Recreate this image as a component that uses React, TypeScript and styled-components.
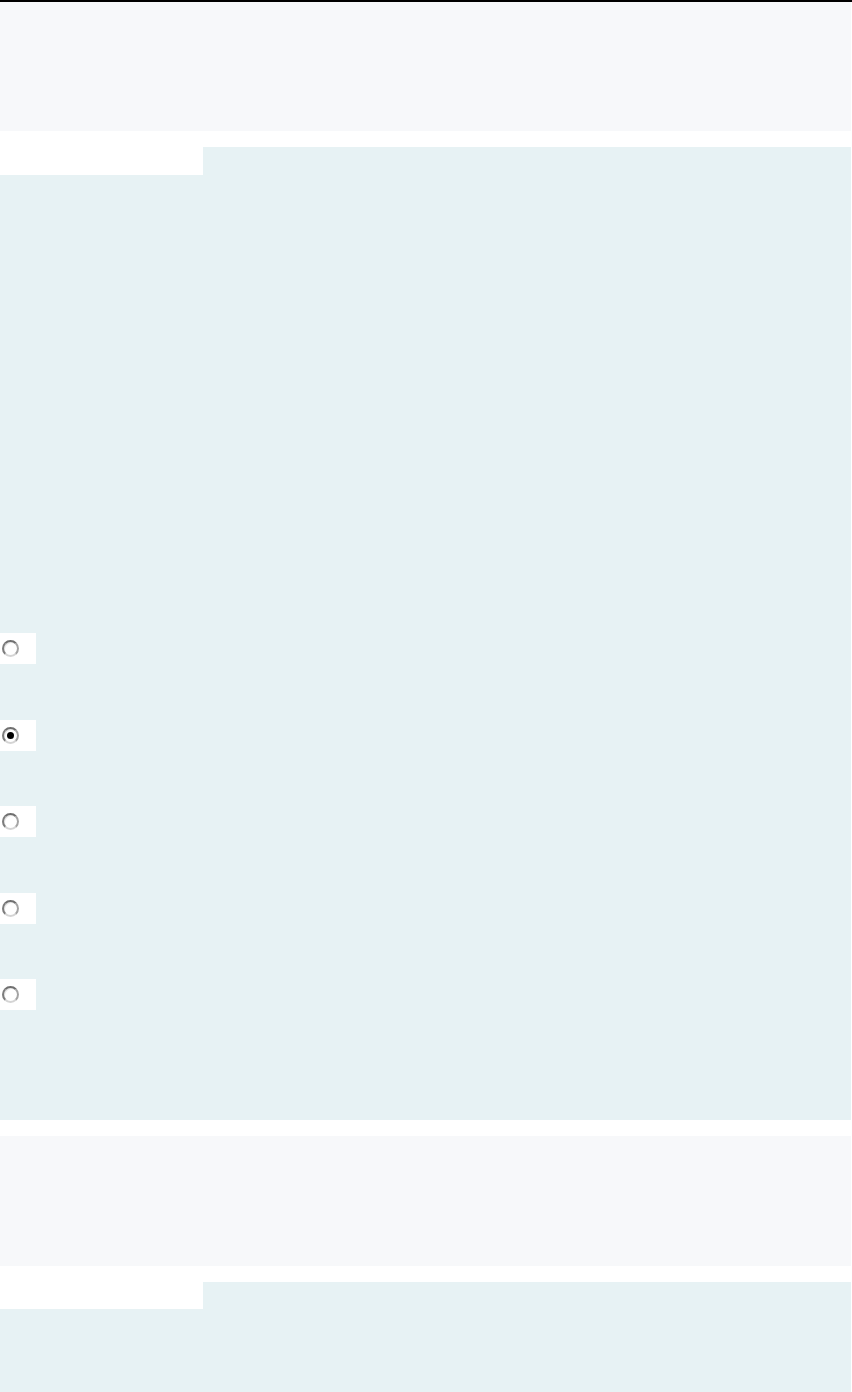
import React from "react";
import styled, { createGlobalStyle } from "styled-components";

const GlobalStyle = createGlobalStyle`
  html, body {
    margin: 0;
    padding: 0;
    background: #ffffff;
    font-family: "Liberation Sans", Arial, sans-serif;
  }
`;

const Page = styled.div`
  border-top: 2px solid #000000;
  display: flex;
  flex-direction: column;
  gap: 16px;
  width: 852px;
`;

const Question = styled.section`
  display: flex;
  flex-direction: column;
  gap: 16px;
  width: 851px;
`;

const Prompt = styled.div<{ $h: number }>`
  height: ${(p) => p.$h}px;
  background: #f7f8fa;
`;

const AnswerPanel = styled.div`
  display: flex;
  flex-direction: column;
  background: #e7f2f4;
`;

const PanelHead = styled.div<{ $h: number }>`
  display: grid;
  grid-template-columns: 203px 1fr;
  height: ${(p) => p.$h}px;
`;

const Tab = styled.div`
  background: #ffffff;
`;

const Options = styled.div<{ $top: number; $bottom: number }>`
  display: flex;
  flex-direction: column;
  gap: 55.5px;
  padding-top: ${(p) => p.$top}px;
  padding-bottom: ${(p) => p.$bottom}px;
`;

const OptionBox = styled.label`
  display: flex;
  align-items: center;
  width: 36px;
  height: 31px;
  padding-left: 2px;
  box-sizing: border-box;
  background: #ffffff;
`;

const Radio = styled.input.attrs({ type: "radio" })`
  appearance: none;
  -webkit-appearance: none;
  margin: 0;
  width: 17px;
  height: 17px;
  border-radius: 50%;
  box-sizing: border-box;
  border: 2px solid;
  border-color: #6f6f6f #a4a4a4 #d4d4d4 #7c7c7c;
  box-shadow: inset 1px 1px 0 #e6e6e6;
  background: #ffffff;
  display: grid;
  place-items: center;
  &:checked::after {
    content: "";
    width: 7px;
    height: 7px;
    border-radius: 50%;
    background: #000000;
  }
`;

const options = [0, 1, 2, 3, 4];

export default function App() {
  return (
    <>
      <GlobalStyle />
      <Page>
        <Question>
          <Prompt $h={129} />
          <AnswerPanel>
            <PanelHead $h={28}>
              <Tab />
            </PanelHead>
            <Options $top={458} $bottom={110}>
              {options.map((i) => (
                <OptionBox key={i}>
                  <Radio name="q1" defaultChecked={i === 1} />
                </OptionBox>
              ))}
            </Options>
          </AnswerPanel>
        </Question>
        <Question>
          <Prompt $h={130} />
          <AnswerPanel>
            <PanelHead $h={27}>
              <Tab />
            </PanelHead>
            <Options $top={200} $bottom={0} />
          </AnswerPanel>
        </Question>
      </Page>
    </>
  );
}
